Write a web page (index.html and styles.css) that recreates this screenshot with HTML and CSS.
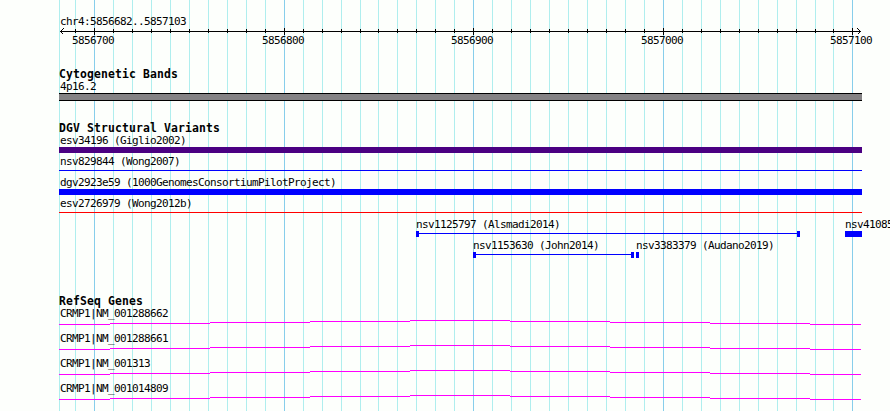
FILE: index.html
```
<!DOCTYPE html>
<html lang="en">
<head>
    <meta charset="UTF-8">
    <title>chr4:5856682..5857103</title>
    <link rel="stylesheet" href="styles.css">
</head>
<body>
    <div class="panel">
        <svg class="grid" width="890" height="411">
            <path class="minor" d="M59.5 0v411M75.5 0v411M113.5 0v411M132.5 0v411M151.5 0v411M170.5 0v411M189.5 0v411M208.5 0v411M227.5 0v411M246.5 0v411M265.5 0v411M303.5 0v411M322.5 0v411M341.5 0v411M360.5 0v411M378.5 0v411M397.5 0v411M416.5 0v411M435.5 0v411M454.5 0v411M492.5 0v411M511.5 0v411M530.5 0v411M549.5 0v411M568.5 0v411M587.5 0v411M606.5 0v411M625.5 0v411M644.5 0v411M682.5 0v411M701.5 0v411M720.5 0v411M739.5 0v411M758.5 0v411M777.5 0v411M796.5 0v411M815.5 0v411M833.5 0v411"/>
            <path class="major" d="M94.5 0v411M284.5 0v411M473.5 0v411M663.5 0v411M852.5 0v411"/>
        </svg>

        <div class="track ruler">
            <div class="label">chr4:5856682..5857103</div>
            <svg class="axis" width="803" height="8" viewBox="59 28 803 8">
                <path d="M60 31.5h801M75.5 29v4M113.5 29v4M132.5 29v4M151.5 29v4M170.5 29v4M189.5 29v4M208.5 29v4M227.5 29v4M246.5 29v4M265.5 29v4M303.5 29v4M322.5 29v4M341.5 29v4M360.5 29v4M378.5 29v4M397.5 29v4M416.5 29v4M435.5 29v4M454.5 29v4M492.5 29v4M511.5 29v4M530.5 29v4M549.5 29v4M568.5 29v4M587.5 29v4M606.5 29v4M625.5 29v4M644.5 29v4M682.5 29v4M701.5 29v4M720.5 29v4M739.5 29v4M758.5 29v4M777.5 29v4M796.5 29v4M815.5 29v4M833.5 29v4"/>
                <path d="M94.5 28v7M284.5 28v7M473.5 28v7M663.5 28v7M852.5 28v7"/>
                <path d="M63.5 28.5l-3 3l3 3M857.5 28.5l3 3l-3 3"/>
            </svg>
            <div class="ticks">
                <span>5856700</span>
                <span>5856800</span>
                <span>5856900</span>
                <span>5857000</span>
                <span>5857100</span>
            </div>
        </div>

        <div class="track bands">
            <h2>Cytogenetic Bands</h2>
            <div class="label">4p16.2</div>
            <div class="band"></div>
        </div>

        <div class="track variants">
            <h2>DGV Structural Variants</h2>
            <div class="row">
                <div class="label">esv34196 (Giglio2002)</div>
                <div class="bar indigo"></div>
            </div>
            <div class="row">
                <div class="label">nsv829844 (Wong2007)</div>
                <div class="line blue"></div>
            </div>
            <div class="row">
                <div class="label">dgv2923e59 (1000GenomesConsortiumPilotProject)</div>
                <div class="bar blue"></div>
            </div>
            <div class="row">
                <div class="label">esv2726979 (Wong2012b)</div>
                <div class="line red"></div>
            </div>
            <div class="row split split-a">
                <div class="feature">
                    <div class="label">nsv1125797 (Alsmadi2014)</div>
                    <div class="span"></div>
                </div>
                <div class="feature">
                    <div class="label">nsv41085</div>
                    <div class="bar blue"></div>
                </div>
            </div>
            <div class="row split split-b">
                <div class="feature">
                    <div class="label">nsv1153630 (John2014)</div>
                    <div class="span"></div>
                </div>
                <div class="feature">
                    <div class="label">nsv3383379 (Audano2019)</div>
                    <div class="bar blue"></div>
                </div>
            </div>
        </div>

        <div class="track genes">
            <h2>RefSeq Genes</h2>
            <div class="gene">
                <div class="label">CRMP1|NM_001288662</div>
                <svg class="intron" width="802" height="5" viewBox="59 0 802 5"><path d="M59 4.5h51M110 3.5h100M210 2.5h100M310 1.5h100M410 .5h100M510 1.5h100M610 2.5h100M710 3.5h100M810 4.5h51"/></svg>
            </div>
            <div class="gene">
                <div class="label">CRMP1|NM_001288661</div>
                <svg class="intron" width="802" height="5" viewBox="59 0 802 5"><path d="M59 4.5h51M110 3.5h100M210 2.5h100M310 1.5h100M410 .5h100M510 1.5h100M610 2.5h100M710 3.5h100M810 4.5h51"/></svg>
            </div>
            <div class="gene">
                <div class="label">CRMP1|NM_001313</div>
                <svg class="intron" width="802" height="5" viewBox="59 0 802 5"><path d="M59 4.5h51M110 3.5h100M210 2.5h100M310 1.5h100M410 .5h100M510 1.5h100M610 2.5h100M710 3.5h100M810 4.5h51"/></svg>
            </div>
            <div class="gene">
                <div class="label">CRMP1|NM_001014809</div>
                <svg class="intron" width="802" height="5" viewBox="59 0 802 5"><path d="M59 4.5h51M110 3.5h100M210 2.5h100M310 1.5h100M410 .5h100M510 1.5h100M610 2.5h100M710 3.5h100M810 4.5h51"/></svg>
            </div>
        </div>
    </div>
</body>
</html>
```
FILE: styles.css
```
html, body {
    margin: 0;
    padding: 0;
}
body {
    background: #fdfffc;
    color: #000;
    font-family: "DejaVu Sans Mono", monospace;
    font-size: 11px;
    line-height: 12px;
}
.panel {
    position: relative;
    width: 831px;
    height: 395px;
    padding: 16px 0 0 59px;
    overflow: hidden;
}
svg {
    display: block;
    fill: none;
    stroke-width: 1;
    shape-rendering: crispEdges;
}
/* grid lines run behind every track */
.grid {
    position: absolute;
    top: 0;
    left: 0;
    z-index: -1;
}
.minor {
    stroke: #afeeee;
}
.major {
    stroke: #87ceeb;
}
.label, .ticks {
    height: 12px;
    letter-spacing: -0.622px;
    white-space: nowrap;
}
.label {
    padding-left: 1px;
}
h2 {
    height: 12px;
    margin: 0;
    font-size: 11.4px;
    line-height: 10px;
    letter-spacing: 0.137px;
}

/* ruler */
.ruler {
    height: 53px;
}
.axis {
    stroke: #000;
}
.ticks {
    display: grid;
    grid-template-columns: 190px 189px 190px 189px 42px;
    margin: -1px 0 0 13px;
}

/* tracks */
.bands {
    height: 54px;
}
.band {
    width: 803px;
    height: 6px;
    border-top: 1px solid #000;
    border-bottom: 1px solid #000;
    background: #848284;
}
.variants {
    height: 173px;
}
.row {
    height: 21px;
}
.bar {
    width: 803px;
    height: 6px;
}
.line {
    width: 803px;
    height: 1px;
    margin-top: 2px;
}
.indigo {
    background: #4b0082;
}
.blue {
    background: #0000ff;
}
.red {
    background: #ff0000;
}
.split {
    display: grid;
}
.split .label {
    padding-left: 0;
}
.split .bar {
    width: 100%;
}
.split-a {
    grid-template-columns: 384px 17px;
    column-gap: 45px;
    padding-left: 357px;
}
.split-b {
    grid-template-columns: 161px 3px;
    column-gap: 2px;
    padding-left: 414px;
}
/* thin line with a block at each end */
.span {
    height: 6px;
    background:
        linear-gradient(#0000ff, #0000ff) 0 0 / 3px 6px no-repeat,
        linear-gradient(#0000ff, #0000ff) 100% 0 / 3px 6px no-repeat,
        linear-gradient(#0000ff, #0000ff) 0 2px / 100% 1px no-repeat;
}
.gene {
    height: 25px;
}
.intron {
    stroke: #ff00ff;
}
```
